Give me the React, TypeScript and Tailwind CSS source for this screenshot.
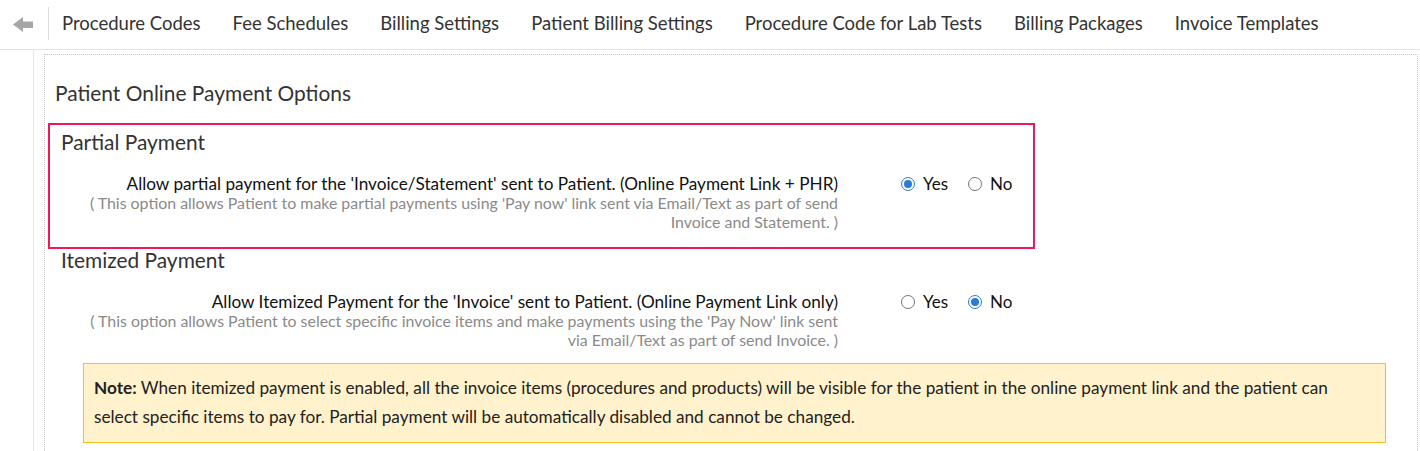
import React from "react";

const navItems = [
  "Procedure Codes",
  "Fee Schedules",
  "Billing Settings",
  "Patient Billing Settings",
  "Procedure Code for Lab Tests",
  "Billing Packages",
  "Invoice Templates",
];

function Radio({ checked, label }: { checked: boolean; label: string }) {
  return (
    <label className="flex items-center">
      <span
        className={
          checked
            ? "w-[14px] h-[14px] rounded-full border border-[#2a7bd6] flex items-center justify-center bg-white"
            : "w-[14px] h-[14px] rounded-full border border-[#767676] bg-white"
        }
      >
        {checked && <span className="w-[8px] h-[8px] rounded-full bg-[#2a7bd6]" />}
      </span>
      <span className="ml-[8px] text-[17px] leading-[18px] text-[#111]">{label}</span>
    </label>
  );
}

function OptionRow({
  main,
  sub,
  yes,
}: {
  main: string;
  sub: React.ReactNode;
  yes: boolean;
}) {
  return (
    <div className="flex items-start">
      <div className="w-[790px] shrink-0 text-right">
        <div className="text-[17.2px] leading-[18px] text-[#111] whitespace-nowrap">{main}</div>
        <div className="text-[15.9px] leading-[19px] text-[#8a8a8a] whitespace-nowrap">{sub}</div>
      </div>
      <div className="ml-[63px] flex items-center gap-[20px] h-[18px]">
        <Radio checked={yes} label="Yes" />
        <Radio checked={!yes} label="No" />
      </div>
    </div>
  );
}

export default function App() {
  return (
    <div
      className="w-[1420px] h-[451px] bg-white overflow-hidden"
      style={{ fontFamily: "Lato, 'Noto Sans', sans-serif" }}
    >
      <div className="h-[50px] border-b border-[#e2e2e2] flex items-center">
        <div className="w-[48px] h-full flex items-center">
          <svg width="48" height="48" viewBox="0 0 48 48" className="block">
            <polygon
              points="13,23.5 23,16 23,20.5 33,20.5 33,27 23,27 23,31"
              fill="#a6a6a6"
            />
          </svg>
        </div>
        <div className="w-px h-[33px] bg-[#dddddd] self-start mt-[7px]" />
        <div className="flex items-center gap-8 ml-[13px] pb-[1px] text-[18.5px] text-[#333] whitespace-nowrap">
          {navItems.map((n) => (
            <span key={n}>{n}</span>
          ))}
        </div>
      </div>
      <div className="ml-[33px] border-l border-[#e6e6e6] pl-[10px] pt-[4px] h-[401px]">
        <div className="border border-dotted border-[#c8c8c8] border-b-0 border-r h-full pl-[3px] mr-[2px]">
          <div className="pl-[7px] pt-[25px] text-[20.9px] leading-[26px] text-[#333]">
            Patient Online Payment Options
          </div>
          <div className="mt-[17px] w-[987px] border-2 border-[#f0185a] pl-[11px] pt-[5px] pb-[16px]">
            <div className="text-[20.9px] leading-[24px] text-[#333]">Partial Payment</div>
            <div className="mt-[21px] -ml-[13px]">
              <OptionRow
                yes={true}
                main="Allow partial payment for the 'Invoice/Statement' sent to Patient. (Online Payment Link + PHR)"
                sub={
                  <>
                    ( This option allows Patient to make partial payments using 'Pay now' link sent via Email/Text as part of send
                    <br />
                    Invoice and Statement. )
                  </>
                }
              />
            </div>
          </div>
          <div className="w-[987px] border-2 border-transparent border-t-0 pl-[11px]">
            <div className="text-[20.9px] leading-[22px] text-[#333]">Itemized Payment</div>
            <div className="mt-[22px] -ml-[13px]">
              <OptionRow
                yes={false}
                main="Allow Itemized Payment for the 'Invoice' sent to Patient. (Online Payment Link only)"
                sub={
                  <>
                    ( This option allows Patient to select specific invoice items and make payments using the 'Pay Now' link sent
                    <br />
                    via Email/Text as part of send Invoice. )
                  </>
                }
              />
            </div>
          </div>
          <div className="mt-[12px] ml-[35px] w-[1303px] bg-[#fff2cc] border border-[#f5c21b] px-[10px] pt-[9px] pb-[11px] text-[17.2px] leading-[29px] text-[#222]">
            <div className="whitespace-nowrap">
              <b className="font-bold">Note:</b> When itemized payment is enabled, all the invoice items (procedures and products) will be visible for the patient in the online payment link and the patient can
            </div>
            <div className="whitespace-nowrap">select specific items to pay for. Partial payment will be automatically disabled and cannot be changed.</div>
          </div>
        </div>
      </div>
    </div>
  );
}
